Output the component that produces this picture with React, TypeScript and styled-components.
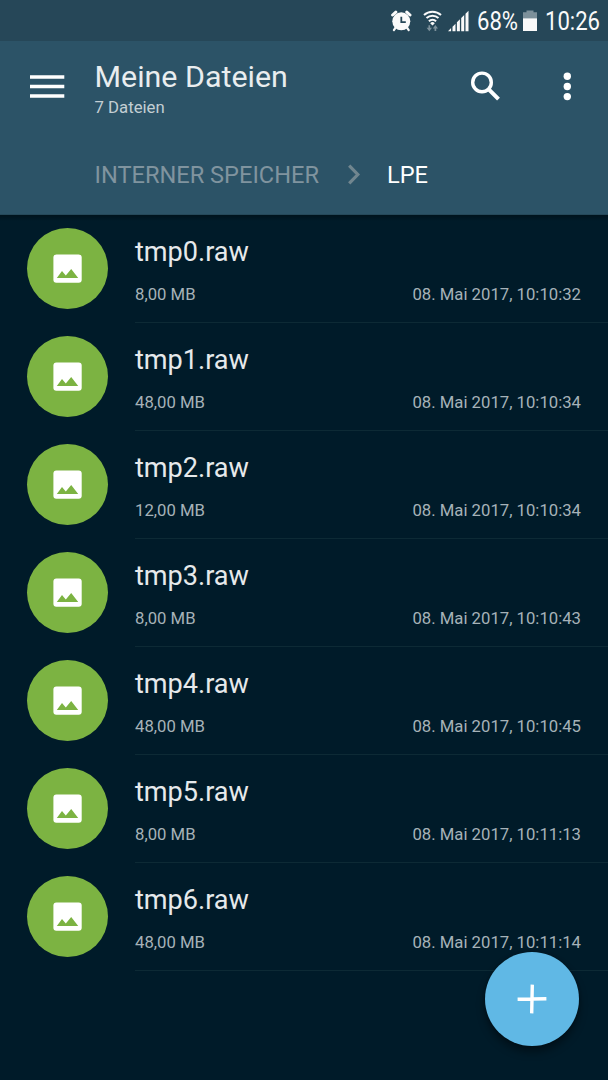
import React from "react";
import styled, { createGlobalStyle } from "styled-components";

const GlobalStyle = createGlobalStyle`
  body {
    margin: 0;
    background: #001b29;
    font-family: Roboto, "Liberation Sans", sans-serif;
  }
`;

const Screen = styled.div`
  position: relative;
  width: 608px;
  height: 1080px;
  overflow: hidden;
  background: #001b29;
`;

const StatusBar = styled.div`
  box-sizing: border-box;
  display: flex;
  align-items: center;
  height: 41px;
  padding-left: 391px;
  background: #264758;
`;

const StatusText = styled.div<{ $width: number; $scale: number }>`
  width: ${(p) => p.$width}px;
  height: 30px;
  font-size: 25.4px;
  line-height: 30px;
  color: #fafafa;
  white-space: nowrap;
  transform: scaleX(${(p) => p.$scale});
  transform-origin: left center;
`;

const Icon = styled.svg<{ $gap?: number }>`
  display: block;
  flex: none;
  margin-right: ${(p) => p.$gap ?? 0}px;
`;

const Header = styled.header`
  box-sizing: border-box;
  height: 174px;
  background: #2c5367;
  border-bottom: 1px solid #26495a;
`;

const Toolbar = styled.div`
  display: flex;
  align-items: flex-start;
  height: 120px;
`;

const IconButton = styled.button<{ $left: number; $top: number }>`
  padding: 0;
  border: 0;
  background: none;
  margin: ${(p) => p.$top}px 0 0 ${(p) => p.$left}px;
`;

const Titles = styled.div`
  width: 344px;
  margin: 18px 0 0 29.5px;
`;

const Title = styled.h1`
  margin: 0;
  font-size: 30.4px;
  line-height: 36px;
  font-weight: 400;
  color: #e9edef;
`;

const Subtitle = styled.div`
  margin-top: 2px;
  font-size: 16.75px;
  line-height: 20px;
  color: #c3ced3;
`;

const Breadcrumb = styled.nav`
  display: flex;
  align-items: center;
  height: 28px;
  padding-left: 94.5px;
  font-size: 23.6px;
  line-height: 28px;
`;

const Crumb = styled.span<{ $active?: boolean; $width?: number }>`
  width: ${(p) => (p.$width ? `${p.$width}px` : "auto")};
  white-space: nowrap;
  color: ${(p) => (p.$active ? "#ffffff" : "#80949f")};
`;

const List = styled.ul`
  margin: 0;
  padding: 0;
  list-style: none;
  background: linear-gradient(#00131d, #001b29 6px);
`;

const Row = styled.li`
  display: flex;
  height: 108px;
`;

const Badge = styled.div`
  display: flex;
  align-items: center;
  justify-content: center;
  width: 81px;
  height: 81px;
  margin: 13px 27px 0;
  border-radius: 50%;
  background: #7cb342;
`;

const Details = styled.div`
  box-sizing: border-box;
  flex: 1;
  padding: 21px 27px 0 0;
  border-bottom: 1px solid #0d2a35;
`;

const FileName = styled.div`
  font-size: 27.1px;
  line-height: 32px;
  color: #e6e9eb;
`;

const Meta = styled.div`
  display: flex;
  justify-content: space-between;
  margin-top: 16px;
  font-size: 16.72px;
  line-height: 20px;
  color: #a6b2b8;
`;

const AddButton = styled.button`
  position: absolute;
  left: 485px;
  top: 952px;
  display: flex;
  align-items: center;
  justify-content: center;
  width: 94px;
  height: 94px;
  padding: 0;
  border: 0;
  border-radius: 50%;
  background: #60b8e5;
  box-shadow: 0 6px 9px rgba(0, 0, 0, 0.4), 0 0 3px rgba(0, 0, 0, 0.3);
`;

const files = [
  { name: "tmp0.raw", size: "8,00 MB", date: "08. Mai 2017, 10:10:32" },
  { name: "tmp1.raw", size: "48,00 MB", date: "08. Mai 2017, 10:10:34" },
  { name: "tmp2.raw", size: "12,00 MB", date: "08. Mai 2017, 10:10:34" },
  { name: "tmp3.raw", size: "8,00 MB", date: "08. Mai 2017, 10:10:43" },
  { name: "tmp4.raw", size: "48,00 MB", date: "08. Mai 2017, 10:10:45" },
  { name: "tmp5.raw", size: "8,00 MB", date: "08. Mai 2017, 10:11:13" },
  { name: "tmp6.raw", size: "48,00 MB", date: "08. Mai 2017, 10:11:14" },
];

const AlarmIcon = () => (
  <Icon $gap={10.5} width="21" height="22" viewBox="0 0 21 22">
    <circle cx="10.3" cy="11.3" r="9" fill="#fafafa" />
    <path d="M1.6 5 4.8 2.1M15.8 2.1 19 5" stroke="#fafafa" strokeWidth="3" strokeLinecap="round" />
    <path d="m4.7 17.5-1.8 2.6M15.9 17.5l1.8 2.6" stroke="#fafafa" strokeWidth="2.2" strokeLinecap="round" />
    <path d="M10.3 6.8v5.3h4.5" fill="none" stroke="#264758" strokeWidth="1.8" />
  </Icon>
);

const WifiIcon = () => (
  <Icon $gap={6.5} width="19" height="22" viewBox="0 0 19 22">
    <path d="M1 5a12.4 12.4 0 0 1 17 0M3.5 8.1a8.9 8.9 0 0 1 12 0M5.9 11.2a5.4 5.4 0 0 1 7.2 0" fill="none" stroke="#fafafa" strokeWidth="2" />
    <path d="m7.2 13.2 2.3 2.3 2.3-2.3a3.3 3.3 0 0 0-4.6 0z" fill="#fafafa" />
    <path d="M6.3 15.2v4M12.4 17v4" stroke="#7d919b" strokeWidth="1.7" />
    <path d="M3.6 17.8H9l-2.7 3.4zM9.8 18.4h5.2l-2.6-3.4z" fill="#7d919b" />
  </Icon>
);

const SignalIcon = () => (
  <Icon $gap={8} width="21" height="22" viewBox="0 0 21 22">
    <path d="M0 21.2 3.1 18v3.2zM4.5 16.7l3-3v7.5h-3zM8.9 12.3l3-3v11.9h-3zM13.2 8l3-3v16.2h-3zM17.5 3.7l3-3v20.5h-3z" fill="#fafafa" />
  </Icon>
);

const BatteryIcon = () => (
  <Icon $gap={8} width="14" height="22" viewBox="0 0 14 22">
    <path d="M3.5 .5h7v1.8H14V9H0V2.3h3.5z" fill="#7d919b" />
    <path d="M0 8.4h14V21H0z" fill="#fafafa" />
  </Icon>
);

const App = () => (
  <Screen>
    <GlobalStyle />
    <StatusBar>
      <AlarmIcon />
      <WifiIcon />
      <SignalIcon />
      <StatusText $width={46} $scale={0.87}>68%</StatusText>
      <BatteryIcon />
      <StatusText $width={56} $scale={0.87}>10:26</StatusText>
    </StatusBar>

    <Header>
      <Toolbar>
        <IconButton $left={30} $top={34} aria-label="Menu">
          <Icon width="35" height="24" viewBox="0 0 35 24">
            <path d="M0 2h34.3M0 11.5h34.3M0 21h34.3" stroke="#fff" strokeWidth="3.4" />
          </Icon>
        </IconButton>
        <Titles>
          <Title>Meine Dateien</Title>
          <Subtitle>7 Dateien</Subtitle>
        </Titles>
        <IconButton $left={31.5} $top={29} aria-label="Search">
          <Icon width="32" height="32" viewBox="0 0 32 32">
            <circle cx="12" cy="12.4" r="9.3" fill="none" stroke="#fff" strokeWidth="3.4" />
            <path d="m18.5 19.2 10 10" stroke="#fff" strokeWidth="4" />
          </Icon>
        </IconButton>
        <IconButton $left={60} $top={31} aria-label="More">
          <Icon width="12" height="29" viewBox="0 0 12 29">
            <circle cx="5.3" cy="4.3" r="3.7" fill="#fff" />
            <circle cx="5.3" cy="14.5" r="3.7" fill="#fff" />
            <circle cx="5.3" cy="24.6" r="3.7" fill="#fff" />
          </Icon>
        </IconButton>
      </Toolbar>
      <Breadcrumb>
        <Crumb $width={252}>INTERNER SPEICHER</Crumb>
        <Icon $gap={26.5} width="14" height="22" viewBox="0 0 14 22">
          <path d="m2.2 1.6 8.6 8.9-8.6 8.9" fill="none" stroke="#71868f" strokeWidth="3.2" />
        </Icon>
        <Crumb $active>LPE</Crumb>
      </Breadcrumb>
    </Header>

    <List>
      {files.map((file) => (
        <Row key={file.name}>
          <Badge>
            <Icon width="29" height="29" viewBox="0 0 29 29">
              <rect x="0.4" y="0.5" width="28.3" height="28.3" rx="3" fill="#fff" />
              <path d="M3.8 24 9 17.1l3.8 4.4 5.4-6.6L25.2 24z" fill="#7cb342" />
            </Icon>
          </Badge>
          <Details>
            <FileName>{file.name}</FileName>
            <Meta>
              <span>{file.size}</span>
              <span>{file.date}</span>
            </Meta>
          </Details>
        </Row>
      ))}
    </List>

    <AddButton aria-label="Add">
      <Icon width="30" height="30" viewBox="0 0 30 30">
        <path d="M15.3.6 14.7 29.4M.6 15.3l28.8-.6" stroke="#fff" strokeWidth="3.4" />
      </Icon>
    </AddButton>
  </Screen>
);

export default App;
